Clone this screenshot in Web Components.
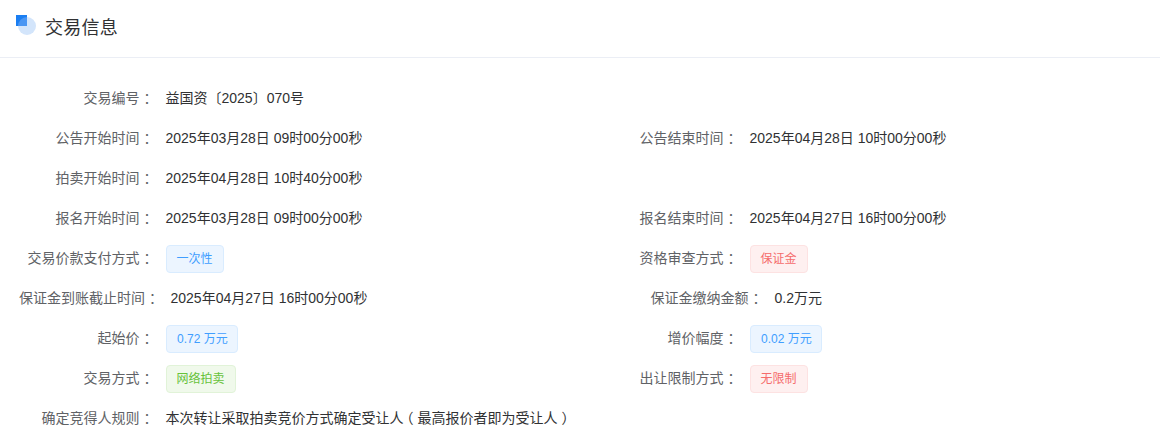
<!DOCTYPE html>
<html lang="zh-CN"><head><meta charset="utf-8"><title>交易信息</title>
<style>html,body{margin:0;background:#fff}body{font-family:"Liberation Sans","Noto Sans CJK SC",sans-serif}
.po{font-feature-settings:"halt";margin-left:3px;margin-right:4px}
.pc{font-feature-settings:"halt";margin-left:4px;margin-right:3px}
.num{padding:0 9.3px 0 10px}</style>
</head><body>
<trade-panel title-text="交易信息">
  <info-row><info-item label="交易编号">益国资〔2025〕070号</info-item></info-row>
  <info-row><info-item label="公告开始时间">2025年03月28日 09时00分00秒</info-item><info-item label="公告结束时间">2025年04月28日 10时00分00秒</info-item></info-row>
  <info-row><info-item label="拍卖开始时间">2025年04月28日 10时40分00秒</info-item></info-row>
  <info-row><info-item label="报名开始时间">2025年03月28日 09时00分00秒</info-item><info-item label="报名结束时间">2025年04月27日 16时00分00秒</info-item></info-row>
  <info-row><info-item label="交易价款支付方式"><info-tag>一次性</info-tag></info-item><info-item label="资格审查方式"><info-tag type="danger">保证金</info-tag></info-item></info-row>
  <info-row><info-item label="保证金到账截止时间" style="--label-width:139.5px">2025年04月27日 16时00分00秒</info-item><info-item label="保证金缴纳金额" style="--label-width:159.5px">0.2万元</info-item></info-row>
  <info-row><info-item label="起始价"><info-tag class="num">0.72 万元</info-tag></info-item><info-item label="增价幅度"><info-tag class="num">0.02 万元</info-tag></info-item></info-row>
  <info-row><info-item label="交易方式"><info-tag type="success">网络拍卖</info-tag></info-item><info-item label="出让限制方式"><info-tag type="danger">无限制</info-tag></info-item></info-row>
  <info-row><info-item label="确定竞得人规则">本次转让采取拍卖竞价方式确定受让人<span class="po">（</span>最高报价者即为受让人<span class="pc">）</span></info-item></info-row>
</trade-panel>
<script>
function def(name, html, setup){
  customElements.define(name, class extends HTMLElement{
    constructor(){super();this.attachShadow({mode:'open'}).innerHTML=html;}
    connectedCallback(){ if(setup) setup(this); }
  });
}
def('trade-panel',`<style>
:host{display:block;width:1160px;height:447px;overflow:hidden;background:#fff;color:#303133;font-size:14px}
header{display:flex;align-items:center;height:58px;box-sizing:border-box;padding-left:16px;gap:9px;border-bottom:1px solid #ebeef5}
svg{display:block;flex:none;margin-top:-7px}
h2{margin:-2px 0 0;font-size:18px;font-weight:400;line-height:24px;color:#303133;letter-spacing:.25px}
main{display:block;padding:19px 0 0 19px}
</style><header>
<svg width="20" height="20" viewBox="0 0 20 20"><circle cx="11" cy="11" r="9" fill="#d3e5fb"/><rect x="0" y="0" width="11" height="11" fill="#1a7ef2"/><path d="M11 2A9 9 0 0 0 2 11H11Z" fill="#4a96f3"/></svg>
<h2></h2></header><main><slot></slot></main>`,el=>{el.shadowRoot.querySelector('h2').textContent=el.getAttribute('title-text');});
def('info-row',`<style>:host{display:grid;grid-template-columns:584px 1fr;height:40px}</style><slot></slot>`);
def('info-item',`<style>
:host{display:flex;align-items:center;gap:12px;height:40px;min-width:0;--label-width:134.5px}
.l{width:var(--label-width);flex:none;text-align:right;color:#606266;white-space:nowrap}
.c{margin-left:4px;margin-right:-4px}
.v{color:#303133;display:flex;align-items:center;white-space:pre}
</style><span class="l"><span class="t"></span><span class="c">：</span></span><span class="v"><span><slot></slot></span></span>`,el=>{el.shadowRoot.querySelector('.t').textContent=el.getAttribute('label');});
def('info-tag',`<style>
:host{display:inline-block;box-sizing:border-box;height:28px;line-height:26px;padding:0 10.5px 0 9.5px;margin:4px 0 0 .5px;font-size:12px;border:1px solid #d9ecff;border-radius:4px;background:#ecf5ff;color:#409eff;white-space:nowrap}
:host([type=danger]){background:#fef0f0;border-color:#fde2e2;color:#f56c6c}
:host([type=success]){background:#f0f9eb;border-color:#e1f3d8;color:#67c23a}
</style><slot></slot>`);
</script>
</body></html>
